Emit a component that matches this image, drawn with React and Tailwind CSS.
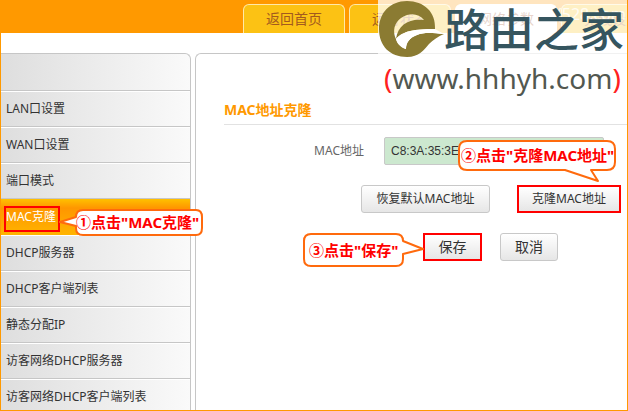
const sideItems = [
  'LAN口设置',
  'WAN口设置',
  '端口模式',
  'MAC克隆',
  'DHCP服务器',
  'DHCP客户端列表',
  '静态分配IP',
  '访客网络DHCP服务器',
  '访客网络DHCP客户端列表',
];

const tabs = ['返回首页', '运行状态', '网络参数', '无线设置'];

function Tabs() {
  return (
    <header className="flex h-[33px] shrink-0 items-end gap-1 overflow-hidden bg-[#ff9900] pl-[242px]">
      {tabs.map((tab) => (
        <a
          key={tab}
          href="#"
          className={
            'flex h-[29px] w-[102px] shrink-0 items-center justify-center rounded-t-md border border-b-0 text-sm ' +
            (tab === '网络参数'
              ? 'border-white bg-white text-[#a0522d]'
              : 'border-[#ffe9a8] bg-[#fcc214] text-[#a35a1e]')
          }
        >
          {tab}
        </a>
      ))}
    </header>
  );
}

function Sidebar() {
  return (
    <nav className="w-[190px] shrink-0 overflow-hidden rounded-tr-md border-t border-r border-[#c6c6c6] bg-linear-to-r from-[#dedede] to-[#fafafa]">
      <div className="h-[37px] border-b border-[#c6c6c6]" />
      {sideItems.map((item) =>
        item === 'MAC克隆' ? (
          <a
            key={item}
            href="#"
            className="relative flex h-9 items-center bg-linear-to-b from-[#ffc000] via-[#ff9600] via-25% to-[#ffb400] pl-[5px] text-xs text-white"
          >
            {item}
            <span className="absolute top-[7px] left-[3px] h-[26px] w-14 border-2 border-[#ff0000]" />
          </a>
        ) : (
          <a
            key={item}
            href="#"
            className="flex h-9 items-center border-t border-b border-t-white border-b-[#c6c6c6] pl-[5px] text-xs text-[#333333]"
          >
            {item}
          </a>
        ),
      )}
    </nav>
  );
}

const buttonStyle =
  'h-7 rounded-[3px] border border-[#c8c8c8] bg-linear-to-b from-white to-[#e6e6e6] text-[#333333]';

function CloneForm() {
  return (
    <main className="min-w-0 flex-1 rounded-tl-md border-t border-l border-[#c6c6c6] pt-[46px] pl-7">
      <h1 className="border-b border-[#e2e2e2] pb-1 text-sm leading-5 font-bold text-[#ff9900]">MAC地址克隆</h1>
      <div className="mt-3 flex items-center gap-5">
        <label htmlFor="mac" className="w-[140px] text-right text-xs text-[#666666]">
          MAC地址
        </label>
        <input
          id="mac"
          defaultValue="C8:3A:35:3E:A0:18"
          className="h-7 w-[220px] rounded-[2px] border border-[#c8c8c8] bg-[#cce8cf] px-1.5 font-['Liberation_Sans',sans-serif] text-xs text-[#333333]"
        />
      </div>
      <div className="mt-5 flex gap-[27px] pl-[137px]">
        <button className={buttonStyle + ' w-[129px] text-xs'}>恢复默认MAC地址</button>
        <button className="h-7 w-[104px] border-2 border-[#ff0000] bg-linear-to-b from-white to-[#e6e6e6] text-xs text-[#333333]">
          克隆MAC地址
        </button>
      </div>
      <div className="mt-5 flex gap-[18px] pl-[199px]">
        <button className="h-7 w-[59px] border-2 border-[#ff0000] bg-linear-to-b from-white to-[#e6e6e6] text-sm leading-5 text-[#333333]">
          保存
        </button>
        <button className={buttonStyle + ' w-[58px] text-sm leading-5'}>取消</button>
      </div>
    </main>
  );
}

function Callout({ place, width, height, outline, textPlace, children }) {
  return (
    <div className={'absolute ' + place}>
      <svg width={width} height={height} className="block" aria-hidden="true">
        <path d={outline} fill="#fff" stroke="#ff6a0d" strokeWidth="2" strokeLinejoin="round" />
      </svg>
      <p className={'absolute whitespace-nowrap text-[15px] leading-5 font-bold text-[#ff0000] ' + textPlace}>
        {children}
      </p>
    </div>
  );
}

function SiteMark() {
  return (
    <div className="absolute top-0 left-[377px] h-[100px] w-[250px] overflow-hidden bg-white/75">
      <p className="absolute top-1 left-[179px] text-base leading-5 whitespace-nowrap text-white/80">(528.com</p>
      <svg viewBox="0 0 68 60" width="68" height="60" className="absolute top-0 left-0" aria-hidden="true">
        <path
          d="M57 29C58 12 46 1 29 1C12 1 1 13 1 29C1 46 12 57 29 57C41 57 46 50 51 44C55 40 61 36 66 34C55 33 46 32 39 35C31 38 28 43 28 49C22 47 19 43 18 39C13 28 19 18 29 15C36 13 42 15 46 20C32 18 20 24 18 39C25 31 36 29 57 29Z"
          fill="#8b7b32"
        />
        <path d="M18 39C25 31 36 29 57 29L66 34C55 33 46 32 39 35C31 38 28 43 28 49C22 47 19 43 18 39Z" fill="#fff" />
      </svg>
      <p className="absolute top-0 left-[66px] font-['Noto_Sans_CJK_SC',sans-serif] text-[45px] leading-[56px] font-medium whitespace-nowrap text-[#35555f]">
        路由之家
      </p>
      <p className="absolute top-[60px] left-1.5 text-[28px] leading-9 whitespace-nowrap text-[#525850]">
        <span className="text-[#ff2020]">(</span>www.hhhyh.com<span className="text-[#ff2020]">)</span>
      </p>
    </div>
  );
}

export default function App() {
  return (
    <div className="relative flex h-screen flex-col overflow-hidden border-x border-b border-[#ff9900] bg-white font-['Noto_Sans','Noto_Sans_CJK_SC',sans-serif]">
      <Tabs />
      <div className="flex min-h-0 flex-1 gap-1 pt-5">
        <Sidebar />
        <CloneForm />
      </div>
      <Callout
        place="top-[208px] left-[57px]"
        width={148}
        height={32}
        outline="M25 2H138Q144 2 144 9V20Q144 27 138 27H25Q18 27 18 20V18L2 14L18 9Q18 2 25 2Z"
        textPlace="top-1 left-[18px]"
      >
        ①点击"MAC克隆"
      </Callout>
      <Callout
        place="top-[139px] left-[456px]"
        width={162}
        height={46}
        outline="M10 2H150Q158 2 158 10V23Q158 31 150 31H134L141 42L108 31H10Q2 31 2 23V10Q2 2 10 2Z"
        textPlace="top-1.5 left-1"
      >
        ②点击"克隆MAC地址"
      </Callout>
      <Callout
        place="top-[232px] left-[301px]"
        width={124}
        height={38}
        outline="M9 2H94Q101 2 101 9L121 17L101 22V27Q101 34 94 34H9Q2 34 2 27V9Q2 2 9 2Z"
        textPlace="top-2 left-[7px]"
      >
        ③点击"保存"
      </Callout>
      <SiteMark />
    </div>
  );
}
